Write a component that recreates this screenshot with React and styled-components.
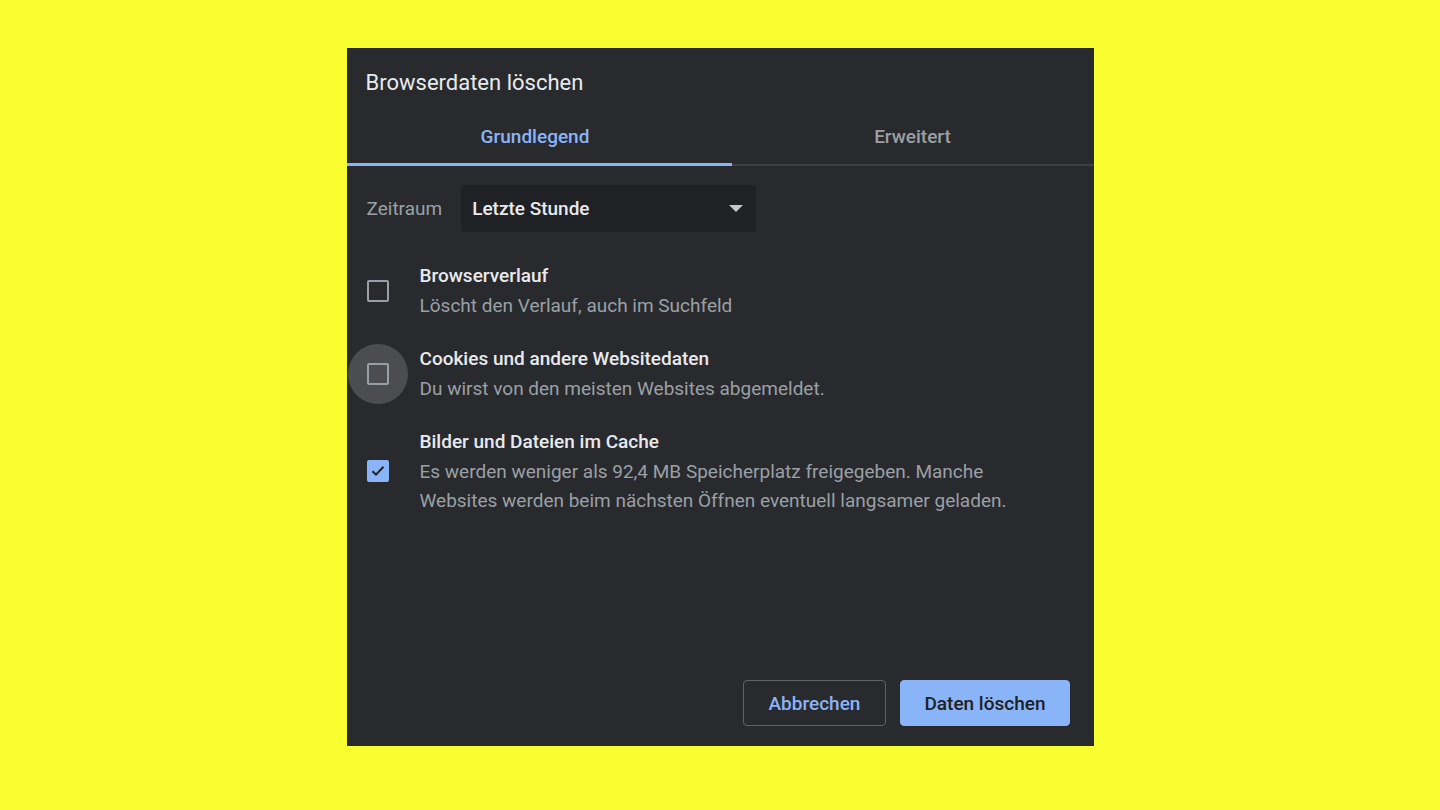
import styled, { createGlobalStyle } from "styled-components";

const GlobalStyle = createGlobalStyle`
  html, body {
    margin: 0;
    padding: 0;
    background: #f8fe30;
    font-family: Roboto, "Liberation Sans", sans-serif;
  }
`;

const Page = styled.div`
  width: 1440px;
  height: 810px;
  display: flex;
  justify-content: center;
  padding-top: 48px;
  box-sizing: border-box;
`;

const Dialog = styled.div`
  width: 747px;
  height: 698px;
  background: #292a2d;
  display: flex;
  flex-direction: column;
`;

const Title = styled.h2`
  margin: 21px 0 13px 19px;
  font-size: 22px;
  line-height: 28px;
  font-weight: 400;
  color: #e8eaed;
`;

const TabBar = styled.div`
  display: flex;
  box-shadow: inset 0 -2px 0 #3c4043;
`;

const Tab = styled.div`
  flex: ${(p) => (p.$active ? "0 0 385px" : "1")};
  height: 56px;
  box-sizing: border-box;
  display: flex;
  align-items: center;
  justify-content: center;
  padding-right: ${(p) => (p.$active ? "8px" : "0")};
  font-size: 19px;
  font-weight: 500;
  color: ${(p) => (p.$active ? "#8ab4f8" : "#9aa0a6")};
  border-bottom: 3px solid ${(p) => (p.$active ? "#8ab4f8" : "transparent")};
`;

const Body = styled.div`
  flex: 1;
  padding: 19px 20px 0 20px;
`;

const RangeRow = styled.div`
  display: flex;
  align-items: center;
  gap: 19px;
  margin-bottom: 29px;
`;

const RangeLabel = styled.span`
  font-size: 19px;
  color: #9aa0a6;
`;

const Select = styled.div`
  width: 295px;
  height: 47px;
  box-sizing: border-box;
  background: #202124;
  border-radius: 4px;
  display: flex;
  align-items: center;
  justify-content: space-between;
  padding: 0 12px 0 11px;
  font-size: 19px;
  font-weight: 500;
  color: #e8eaed;
`;

const Caret = styled.span`
  width: 0;
  height: 0;
  border-left: 7px solid transparent;
  border-right: 7px solid transparent;
  border-top: 7px solid #c4c7c5;
  margin-right: 1px;
`;

const Options = styled.div`
  display: flex;
  flex-direction: column;
  gap: 24px;
`;

const Option = styled.div`
  display: flex;
  align-items: center;
  gap: 31px;
`;

const Box = styled.span`
  position: relative;
  flex: none;
  width: 22px;
  height: 22px;
  box-sizing: border-box;
  border-radius: 2px;
  border: 2px solid ${(p) => (p.$checked ? "#8ab4f8" : "#9aa0a6")};
  background: ${(p) => (p.$checked ? "#8ab4f8" : "transparent")};
  display: flex;
  align-items: center;
  justify-content: center;

  &::before {
    content: "";
    display: ${(p) => (p.$hover ? "block" : "none")};
    position: absolute;
    left: 50%;
    top: 50%;
    width: 60px;
    height: 60px;
    margin: -30px 0 0 -30px;
    border-radius: 50%;
    background: rgba(154, 160, 166, 0.3);
  }
`;

const Texts = styled.div`
  display: flex;
  flex-direction: column;
  font-size: 19px;
  line-height: 29.5px;
`;

const OptionTitle = styled.span`
  font-weight: 500;
  color: #e8eaed;
`;

const OptionDesc = styled.span`
  color: #9aa0a6;
`;

const Footer = styled.div`
  display: flex;
  justify-content: flex-end;
  gap: 14px;
  padding: 0 24px 20px 0;
`;

const Button = styled.button`
  height: 46px;
  box-sizing: border-box;
  padding: 0 ${(p) => (p.$primary ? "23px" : "25px")};
  border-radius: 4px;
  font-family: inherit;
  font-size: 19px;
  font-weight: 500;
  border: 1px solid ${(p) => (p.$primary ? "#8ab4f8" : "#5f6368")};
  background: ${(p) => (p.$primary ? "#8ab4f8" : "transparent")};
  color: ${(p) => (p.$primary ? "#202124" : "#8ab4f8")};
`;

const options = [
  {
    title: "Browserverlauf",
    desc: ["Löscht den Verlauf, auch im Suchfeld"],
  },
  {
    title: "Cookies und andere Websitedaten",
    desc: ["Du wirst von den meisten Websites abgemeldet."],
    hover: true,
  },
  {
    title: "Bilder und Dateien im Cache",
    desc: [
      "Es werden weniger als 92,4 MB Speicherplatz freigegeben. Manche",
      "Websites werden beim nächsten Öffnen eventuell langsamer geladen.",
    ],
    checked: true,
  },
];

export default function App() {
  return (
    <>
      <GlobalStyle />
      <Page>
        <Dialog>
          <Title>Browserdaten löschen</Title>
          <TabBar>
            <Tab $active>Grundlegend</Tab>
            <Tab>Erweitert</Tab>
          </TabBar>
          <Body>
            <RangeRow>
              <RangeLabel>Zeitraum</RangeLabel>
              <Select>
                Letzte Stunde
                <Caret />
              </Select>
            </RangeRow>
            <Options>
              {options.map((o) => (
                <Option key={o.title}>
                  <Box $checked={o.checked} $hover={o.hover}>
                    {o.checked && (
                      <svg width="14" height="12" viewBox="0 0 14 12">
                        <path d="M1.5 6.2 L5 9.6 L12.5 1.8" fill="none" stroke="#202124" strokeWidth="2" />
                      </svg>
                    )}
                  </Box>
                  <Texts>
                    <OptionTitle>{o.title}</OptionTitle>
                    {o.desc.map((d) => (
                      <OptionDesc key={d}>{d}</OptionDesc>
                    ))}
                  </Texts>
                </Option>
              ))}
            </Options>
          </Body>
          <Footer>
            <Button>Abbrechen</Button>
            <Button $primary>Daten löschen</Button>
          </Footer>
        </Dialog>
      </Page>
    </>
  );
}
